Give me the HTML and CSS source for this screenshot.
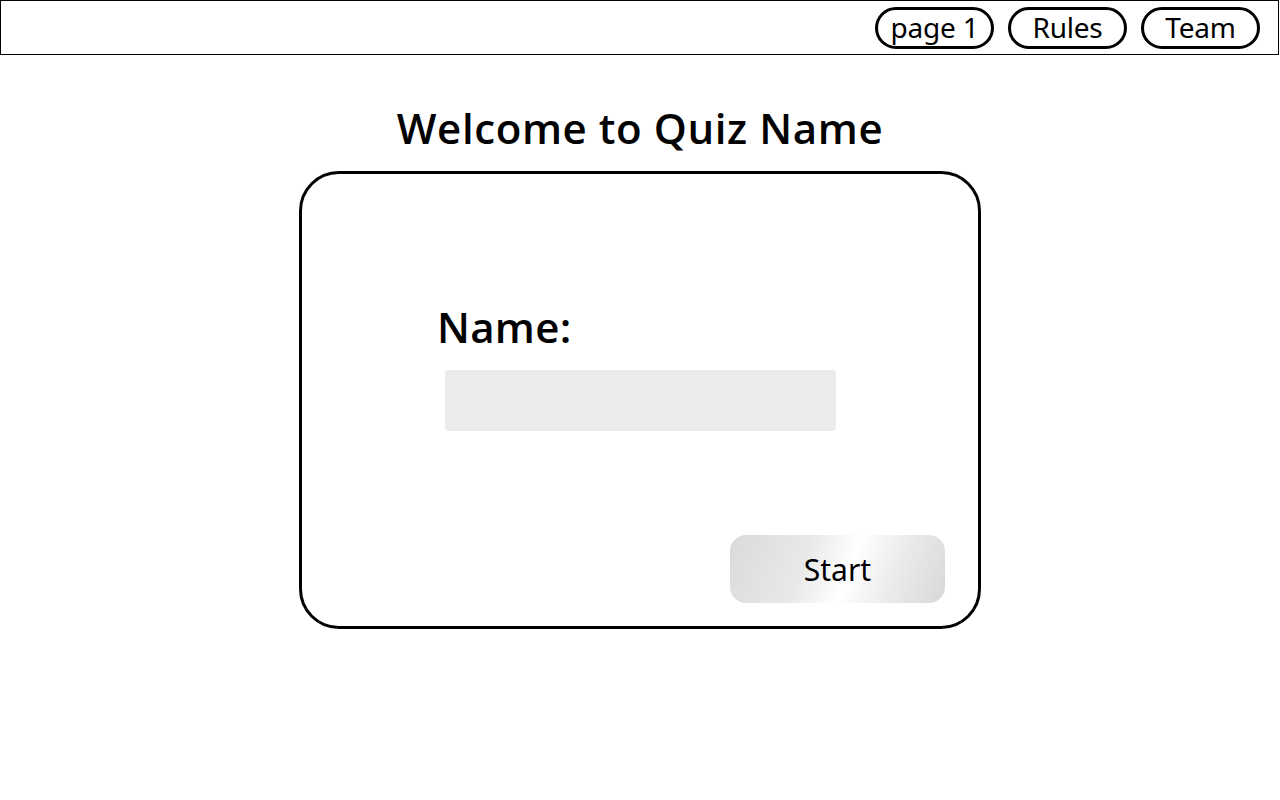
FILE: index.html
```html
<!DOCTYPE html>
<html lang="en">
<head>
<meta charset="utf-8">
<title>Quiz</title>
<link rel="stylesheet" href="styles.css">
</head>
<body>
<header class="topbar">
  <nav class="nav">
    <a class="pill" href="#">page 1</a>
    <a class="pill" href="#">Rules</a>
    <a class="pill" href="#">Team</a>
  </nav>
</header>
<main class="main">
  <h1 class="title">Welcome to Quiz Name</h1>
  <section class="card">
    <div class="field">
      <label class="label" for="name">Name:</label>
      <input class="input" id="name" type="text">
    </div>
    <div class="actions">
      <button class="start" type="button">Start</button>
    </div>
  </section>
</main>
</body>
</html>
```
FILE: styles.css
```css
* { box-sizing: border-box; }
html, body { margin: 0; padding: 0; background: #fff; }
body { font-family: "Noto Sans", "Open Sans", sans-serif; color: #000; }

.topbar {
  height: 55px;
  border: 1px solid #000;
  width: 1279px;
}
.nav {
  display: flex;
  justify-content: flex-end;
  gap: 14px;
  padding: 6px 18px 0 0;
}
.pill {
  width: 119px;
  height: 42px;
  border: 3px solid #000;
  border-radius: 21px;
  display: flex;
  align-items: center;
  justify-content: center;
  color: #000;
  text-decoration: none;
  font-size: 28px;
  letter-spacing: -0.2px;
  line-height: 1;
  padding-bottom: 2px;
  white-space: nowrap;
}

.main {
  display: flex;
  flex-direction: column;
  align-items: center;
}
.title {
  margin: 45px 0 0;
  font-family: "Open Sans", sans-serif;
  font-weight: 600;
  font-size: 42px;
  line-height: 56px;
  letter-spacing: 0.6px;
}
.card {
  margin-top: 15px;
  width: 682px;
  height: 458px;
  border: 3px solid #000;
  border-radius: 40px;
  display: flex;
  flex-direction: column;
  padding: 0 33px 23px 135px;
}
.field {
  display: flex;
  flex-direction: column;
  margin-top: 125px;
}
.label {
  font-family: "Open Sans", sans-serif;
  font-weight: 600;
  font-size: 42px;
  line-height: 56px;
  letter-spacing: 0.3px;
}
.input {
  margin: 15px 0 0 8px;
  width: 391px;
  height: 61px;
  border: none;
  border-radius: 4px;
  background: #ebebeb;
}
.actions {
  margin-top: auto;
  display: flex;
  justify-content: flex-end;
}
.start {
  width: 215px;
  height: 68px;
  border: none;
  border-radius: 16px;
  background: linear-gradient(110deg, #dadada 0%, #e9e9e9 35%, #ffffff 55%, #ebebeb 75%, #d8d8d8 100%);
  font-family: "Noto Sans", sans-serif;
  font-size: 30px;
  color: #000;
  padding: 0;
}
```
